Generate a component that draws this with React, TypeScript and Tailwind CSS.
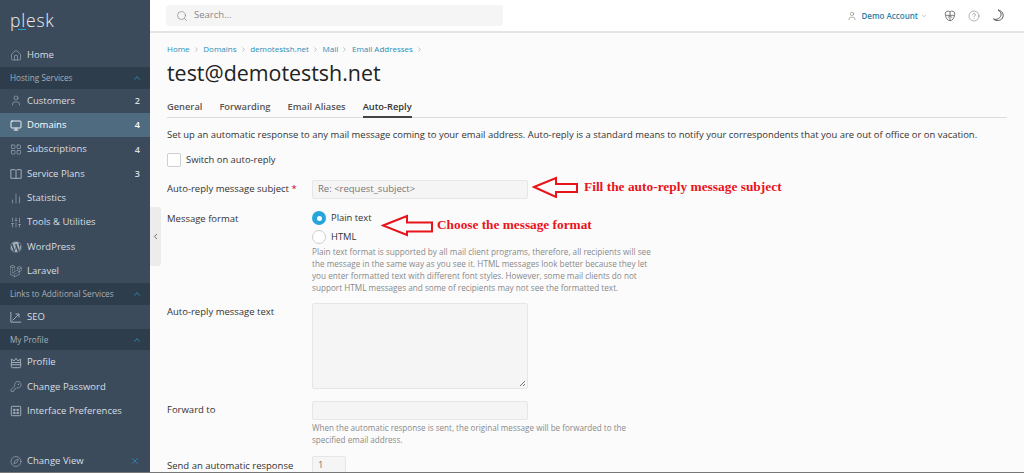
import React from "react";
import { Home, User, Monitor, LayoutGrid, ChartNoAxesColumn, SlidersVertical, KeyRound, X, ChevronUp, ChevronDown, ChevronLeft, ChevronRight, Search, CircleHelp, Compass } from "lucide-react";
import { FaWordpress, FaLaravel } from "react-icons/fa";

const ic = { size: 13, strokeWidth: 1.2 };

const Book = () => (
  <svg width="12" height="12" viewBox="0 0 14 14" fill="none" stroke="currentColor" strokeWidth="1.1"><path d="M1 2h5l1 1 1-1h5v10H8l-1 .6L6 12H1zM7 3v9.500" /></svg>
);
const Seo = () => (
  <svg width="12" height="12" viewBox="0 0 14 14" fill="none" stroke="currentColor" strokeWidth="1.1"><path d="M1 1v12h12M3 11l7-7M6.500 3.500h4v4" /></svg>
);
const Crown = () => (
  <svg width="12" height="12" viewBox="0 0 14 14" fill="none" stroke="currentColor" strokeWidth="1.1"><path d="M2 6.500 1.500 2.500 5 4.500 7 1.500 9 4.500 12.500 2.500 12 6.500M1.500 6.500h11v4.500a1.500 1.500 0 0 1-1.500 1.500H3a1.500 1.500 0 0 1-1.500-1.500zM1.500 9h11" /></svg>
);
const Prefs = () => (
  <svg width="12" height="12" viewBox="0 0 14 14" fill="none" stroke="currentColor" strokeWidth="1.1"><rect x="1.500" y="1.500" width="11" height="11" rx="1" /><path d="M4 5h2v1.500H4zM8 5h2v1.500H8zM4 8.500h2V10H4zM8 8.500h2V10H8z" /></svg>
);
const Dog = () => (
  <svg width="12" height="12" viewBox="0 0 14 14" fill="none" stroke="currentColor" strokeWidth="1"><path d="M3.500 1.500a3 3 0 0 1 3.500.8 3 3 0 0 1 3.500-.8c2 .8 2.500 3 1.800 4.700-.3 2.800-2.300 6.300-5.300 6.300s-5-3.500-5.300-6.300C1 4.500 1.500 2.300 3.500 1.500zM7 2.300V12.500M1.800 6.200h10.400M4.500 9 7 6.500 9.500 9" /></svg>
);
const Crescent = () => (
  <svg width="12" height="13" viewBox="0 0 12 13" fill="none" stroke="#555" strokeWidth="1"><path d="M6 1c3 1.500 4 5 1.800 7.500C6 10.500 3.500 10.800 1.500 10c3 2.500 7 2 9-1C12.500 5.500 10 1.500 6 1z" /></svg>
);

function Item({ icon, label, badge, active }: { icon: React.ReactNode; label: string; badge?: string; active?: boolean }) {
  return (
    <div className={`h-[24.3px] shrink-0 flex items-center pl-[10px] pr-[10px] ${active ? "bg-[#4f6b80] text-white" : "text-[#d8dee3]"}`}>
      <span className={`w-[12px] flex justify-center shrink-0 ${active ? "text-white" : "text-[#a9b4bd]"}`}>{icon}</span>
      <span className="ml-[5px] flex-1 text-[9.500px]">{label}</span>
      {badge && <span className="text-[9px] font-semibold">{badge}</span>}
    </div>
  );
}

function Group({ label }: { label: string }) {
  return (
    <div className="h-[21.500px] shrink-0 bg-[#2e3d4b] flex items-center justify-between pl-[10px] pr-[8px] text-[#a3afb9] text-[8.200px]">
      <span>{label}</span>
      <ChevronUp size={10} strokeWidth={1.800} className="text-[#28a0d8]" />
    </div>
  );
}

function Crumb({ label }: { label: string }) {
  return (
    <span className="flex items-center">
      <span className="text-[#2b8db5]">{label}</span>
      <ChevronRight size={7} strokeWidth={1.500} className="text-[#777] ml-[3px] mr-[3.700px]" />
    </span>
  );
}

function Field({ label, y, children }: { label: React.ReactNode; y?: string; children: React.ReactNode }) {
  return (
    <div className="flex">
      <div className={`w-[145px] shrink-0 text-[9.500px] leading-[14px] text-[#333] ${y ?? ""}`}>{label}</div>
      <div className="flex-1">{children}</div>
    </div>
  );
}

const inputCls = "bg-[#f5f5f5] border border-[#e6e6e6] rounded-[2px]";

export default function App() {
  return (
    <div className="relative flex w-[1024px] h-[473px] overflow-hidden bg-[#fbfbfb] font-['Open_Sans',sans-serif] border-b border-[#777]">
      <aside className="w-[150px] shrink-0 bg-[#3b4b5c] flex flex-col">
        <div className="h-[43px] shrink-0 pl-[10px] pt-[7px] relative">
          <span className="text-[#e8edf0] text-[17.500px] font-light tracking-[0.8px] leading-[26px]">plesk</span>
          <span className="absolute left-[18px] top-[29px] w-[8px] h-[1px] bg-[#28a0d8]"></span>
        </div>
        <Item icon={<Home {...ic} />} label="Home" />
        <Group label="Hosting Services" />
        <Item icon={<User {...ic} />} label="Customers" badge="2" />
        <Item icon={<Monitor {...ic} strokeWidth={1.800} />} label="Domains" badge="4" active />
        <Item icon={<LayoutGrid {...ic} />} label="Subscriptions" badge="4" />
        <Item icon={<Book />} label="Service Plans" badge="3" />
        <Item icon={<ChartNoAxesColumn {...ic} />} label="Statistics" />
        <Item icon={<SlidersVertical {...ic} />} label="Tools & Utilities" />
        <Item icon={<FaWordpress size={12} />} label="WordPress" />
        <Item icon={<FaLaravel size={12} />} label="Laravel" />
        <Group label="Links to Additional Services" />
        <Item icon={<Seo />} label="SEO" />
        <Group label="My Profile" />
        <Item icon={<Crown />} label="Profile" />
        <Item icon={<KeyRound {...ic} />} label="Change Password" />
        <Item icon={<Prefs />} label="Interface Preferences" />
        <div className="mt-auto h-[22px] shrink-0 flex items-center pl-[10px] pr-[10px] text-[#d8dee3]">
          <span className="w-[12px] flex justify-center text-[#a9b4bd]"><Compass {...ic} /></span>
          <span className="ml-[5px] flex-1 text-[9.500px]">Change View</span>
          <X size={10} strokeWidth={1.500} className="text-[#28a0d8]" />
        </div>
      </aside>

      <div className="absolute left-[150px] top-[207px] w-[11px] h-[59px] bg-[#ececec] rounded-r-[3px] flex items-center justify-center">
        <ChevronLeft size={9} strokeWidth={2} className="text-[#444]" />
      </div>

      <main className="flex-1 min-w-0 flex flex-col">
        <header className="h-[33px] shrink-0 bg-white border-b-2 border-[#e4e4e4] flex items-center pl-[16px] pr-[20px]">
          <div className="w-[337px] h-[21px] bg-[#f5f5f5] rounded-[3px] flex items-center pl-[10px] text-[#888] text-[9.500px]">
            <Search size={12} strokeWidth={1.200} className="text-[#777]" />
            <span className="ml-[6px]">Search...</span>
          </div>
          <div className="ml-auto flex items-center text-[#666]">
            <User size={10} strokeWidth={1.200} />
            <span className="ml-[4px] text-[8px] font-semibold text-[#2b7fa5]">Demo Account</span>
            <ChevronDown size={6} strokeWidth={1.500} className="ml-[3px]" />
            <span className="ml-[17px]"><Dog /></span>
            <CircleHelp size={12} strokeWidth={1} className="ml-[12px]" />
            <span className="ml-[12px]"><Crescent /></span>
          </div>
        </header>

        <div className="pl-[17px] pr-[17px] flex flex-col">
          <nav className="mt-[10px] flex items-center text-[8px] leading-[12px]">
            <Crumb label="Home" /><Crumb label="Domains" /><Crumb label="demotestsh.net" /><Crumb label="Mail" /><Crumb label="Email Addresses" />
          </nav>
          <h1 className="mt-[4px] text-[21.400px] font-normal leading-[28px] text-[#222]">test@demotestsh.net</h1>
          <div className="mt-[6px] flex gap-[17px] border-b border-[#dcdcdc] h-[25px] text-[9.300px] leading-[14px] font-semibold text-[#555]">
            <span className="pt-[7px]">General</span>
            <span className="pt-[7px]">Forwarding</span>
            <span className="pt-[7px]">Email Aliases</span>
            <span className="pt-[7px] h-[25px] text-[#333] border-b-2 border-[#444]">Auto-Reply</span>
          </div>
          <p className="mt-[10px] text-[9.450px] leading-[14px] text-[#333] whitespace-nowrap">Set up an automatic response to any mail message coming to your email address. Auto-reply is a standard means to notify your correspondents that you are out of office or on vacation.</p>
          <label className="mt-[11px] flex items-center h-[14px]">
            <span className="w-[14px] h-[14px] bg-white border border-[#cfcfcf] rounded-[2px]"></span>
            <span className="ml-[5px] text-[9.400px] text-[#333]">Switch on auto-reply</span>
          </label>

          <div className="mt-[13px]">
            <Field label={<span>Auto-reply message subject <span className="text-[#d0021b]">*</span></span>} y="pt-[2px]">
              <div className={`${inputCls} w-[216px] h-[19px] flex items-center pl-[5px] text-[9.500px] text-[#777]`}>Re: &lt;request_subject&gt;</div>
            </Field>
          </div>
          <div className="mt-[12px]">
            <Field label="Message format" y="pt-[1px]">
              <div className="flex items-center h-[18px] -mt-[2px]">
                <span className="w-[14px] h-[14px] rounded-full bg-[#28a4dc] flex items-center justify-center"><span className="w-[5px] h-[5px] rounded-full bg-white"></span></span>
                <span className="ml-[5px] text-[9.400px] text-[#333]">Plain text</span>
              </div>
              <div className="flex items-center h-[18px] mt-[1px]">
                <span className="w-[14px] h-[14px] rounded-full bg-white border border-[#cfcfcf]"></span>
                <span className="ml-[5px] text-[9.400px] text-[#333]">HTML</span>
              </div>
              <p className="w-[346px] text-[8.200px] leading-[12px] text-[#8a8a8a]">Plain text format is supported by all mail client programs, therefore, all recipients will see the message in the same way as you see it. HTML messages look better because they let you enter formatted text with different font styles. However, some mail clients do not support HTML messages and some of recipients may not see the formatted text.</p>
            </Field>
          </div>
          <div className="mt-[9px]">
            <Field label="Auto-reply message text" y="pt-[2px]">
              <div className={`${inputCls} relative w-[216px] h-[86px]`}>
                <svg className="absolute right-[1px] bottom-[1px]" width="7" height="7" viewBox="0 0 7 7" stroke="#555" strokeWidth="0.800"><path d="M1 6 6 1M4 6l2-2" /></svg>
              </div>
            </Field>
          </div>
          <div className="mt-[12px]">
            <Field label="Forward to" y="pt-[2px]">
              <div className={`${inputCls} w-[216px] h-[19px]`}></div>
              <p className="mt-[2px] w-[320px] text-[8.100px] leading-[12px] text-[#8a8a8a]">When the automatic response is sent, the original message will be forwarded to the specified email address.</p>
            </Field>
          </div>
          <div className="mt-[10px]">
            <Field label="Send an automatic response" y="pt-[3px]">
              <div className={`${inputCls} w-[34px] h-[19px] flex items-center pl-[5px] text-[9.500px] text-[#777]`}>1</div>
            </Field>
          </div>
        </div>
      </main>

      <svg className="absolute left-[532px] top-[176px]" width="47" height="22" viewBox="0 0 47 22" fill="none" stroke="#e8141c" strokeWidth="2"><path d="M2 11 24 2v6h21v8H24v5z" /></svg>
      <span className="absolute left-[584px] top-[179px] text-[13.400px] leading-[16px] font-bold text-[#e8141c] font-['Liberation_Serif',serif] whitespace-nowrap">Fill the auto-reply message subject</span>
      <svg className="absolute left-[381px] top-[214px]" width="53" height="23" viewBox="0 0 53 23" fill="none" stroke="#e8141c" strokeWidth="2"><path d="M2 11.500 26 2v6.500h25v9H26V21z" /></svg>
      <span className="absolute left-[437px] top-[217px] text-[13.300px] leading-[16px] font-bold text-[#e8141c] font-['Liberation_Serif',serif] whitespace-nowrap">Choose the message format</span>
    </div>
  );
}
